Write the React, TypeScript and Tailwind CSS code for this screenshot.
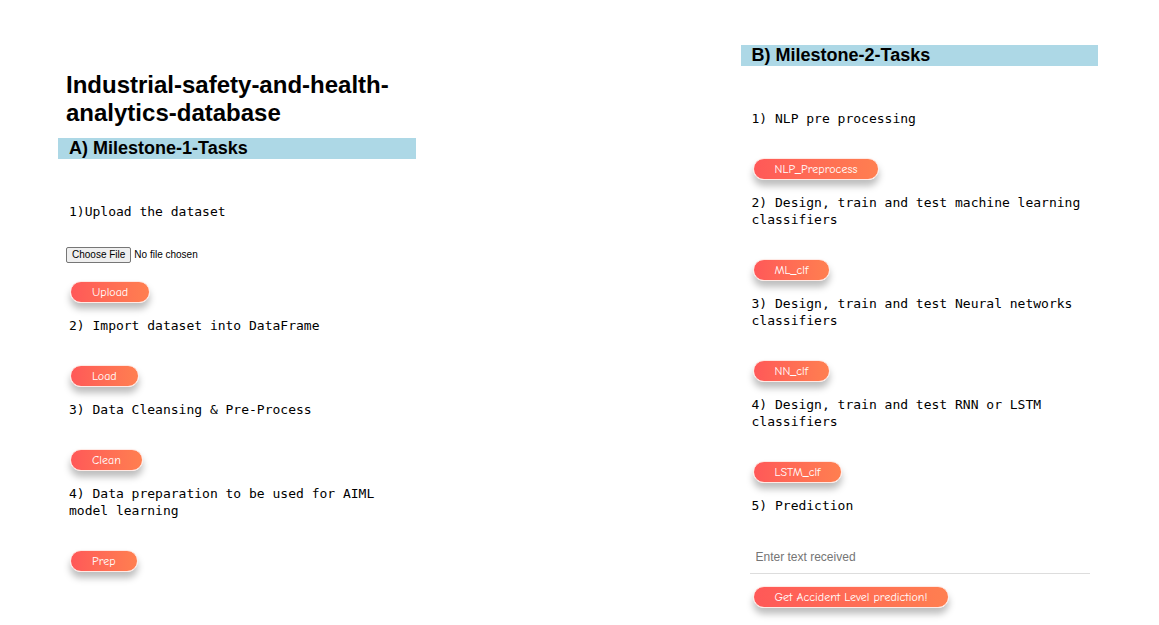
import type { ReactNode } from "react";

function SectionTitle({ children }: { children: ReactNode }) {
  return (
    <h2 className="bg-[#add8e6] pl-[11px] text-[18px] leading-[21px] font-bold">
      {children}
    </h2>
  );
}

function TaskText({ children }: { children: ReactNode }) {
  return (
    <p className="mb-[31px] pl-[11px] font-['DejaVu_Sans_Mono',monospace] text-[13px] leading-[17px]">
      {children}
    </p>
  );
}

function ActionButton({ children }: { children: ReactNode }) {
  return (
    <button
      type="button"
      className="ml-3 block h-[22px] cursor-pointer rounded-full border border-[#ffe9e4] bg-linear-to-r from-[#ff5858] to-[#ff7f50] px-[21px] font-['Comic_Sans_MS','Comic_Neue',cursive] text-[12px] leading-[20px] text-white shadow-[0_6px_7px_rgba(0,0,0,0.26)]"
    >
      {children}
    </button>
  );
}

function Task({ text, action }: { text: string; action: string }) {
  return (
    <div className="mb-[14px]">
      <TaskText>{text}</TaskText>
      <ActionButton>{action}</ActionButton>
    </div>
  );
}

export default function App() {
  return (
    <main className="grid grid-cols-[11fr_10fr_11fr] bg-white pr-[61px] pb-4 pl-[58px] font-['Liberation_Sans',Arial,sans-serif] text-black">
      <section className="pt-[71px]">
        <h1 className="mb-[11px] pl-2 text-[24px] leading-[28px] font-bold">
          Industrial-safety-and-health-analytics-database
        </h1>
        <SectionTitle>A) Milestone-1-Tasks</SectionTitle>
        <div className="pt-11">
          <div className="mb-[14px]">
            <label
              htmlFor="dataset"
              className="mb-[27px] block pl-[11px] font-['DejaVu_Sans_Mono',monospace] text-[13px] leading-[17px]"
            >
              1)Upload the dataset
            </label>
            <input
              id="dataset"
              type="file"
              className="mb-[18px] ml-2 block h-4 text-[10px] leading-[14px] file:mr-[3px] file:h-4 file:rounded-[2px] file:border file:border-solid file:border-[#767676] file:bg-[#efefef] file:px-[5px] file:py-0 file:leading-[14px]"
            />
            <ActionButton>Upload</ActionButton>
          </div>
          <Task text="2) Import dataset into DataFrame" action="Load" />
          <Task text="3) Data Cleansing & Pre-Process" action="Clean" />
          <Task
            text="4) Data preparation to be used for AIML model learning"
            action="Prep"
          />
        </div>
      </section>

      <section className="col-start-3 pt-[45px]">
        <SectionTitle>B) Milestone-2-Tasks</SectionTitle>
        <div className="pt-11">
          <Task text="1) NLP pre processing" action="NLP_Preprocess" />
          <Task
            text="2) Design, train and test machine learning classifiers"
            action="ML_clf"
          />
          <Task
            text="3) Design, train and test Neural networks classifiers"
            action="NN_clf"
          />
          <Task
            text="4) Design, train and test RNN or LSTM classifiers"
            action="LSTM_clf"
          />
          <label
            htmlFor="prediction"
            className="mb-[26px] block pl-[11px] font-['DejaVu_Sans_Mono',monospace] text-[13px] leading-[17px]"
          >
            5) Prediction
          </label>
          <div className="mb-3 pr-2 pl-[9px]">
            <input
              id="prediction"
              type="text"
              placeholder="Enter text received"
              className="block h-[34px] w-full border-b border-[#dddddd] px-[6px] text-[12px] outline-none placeholder:text-[#757575]"
            />
          </div>
          <ActionButton>Get Accident Level prediction!</ActionButton>
        </div>
      </section>
    </main>
  );
}
